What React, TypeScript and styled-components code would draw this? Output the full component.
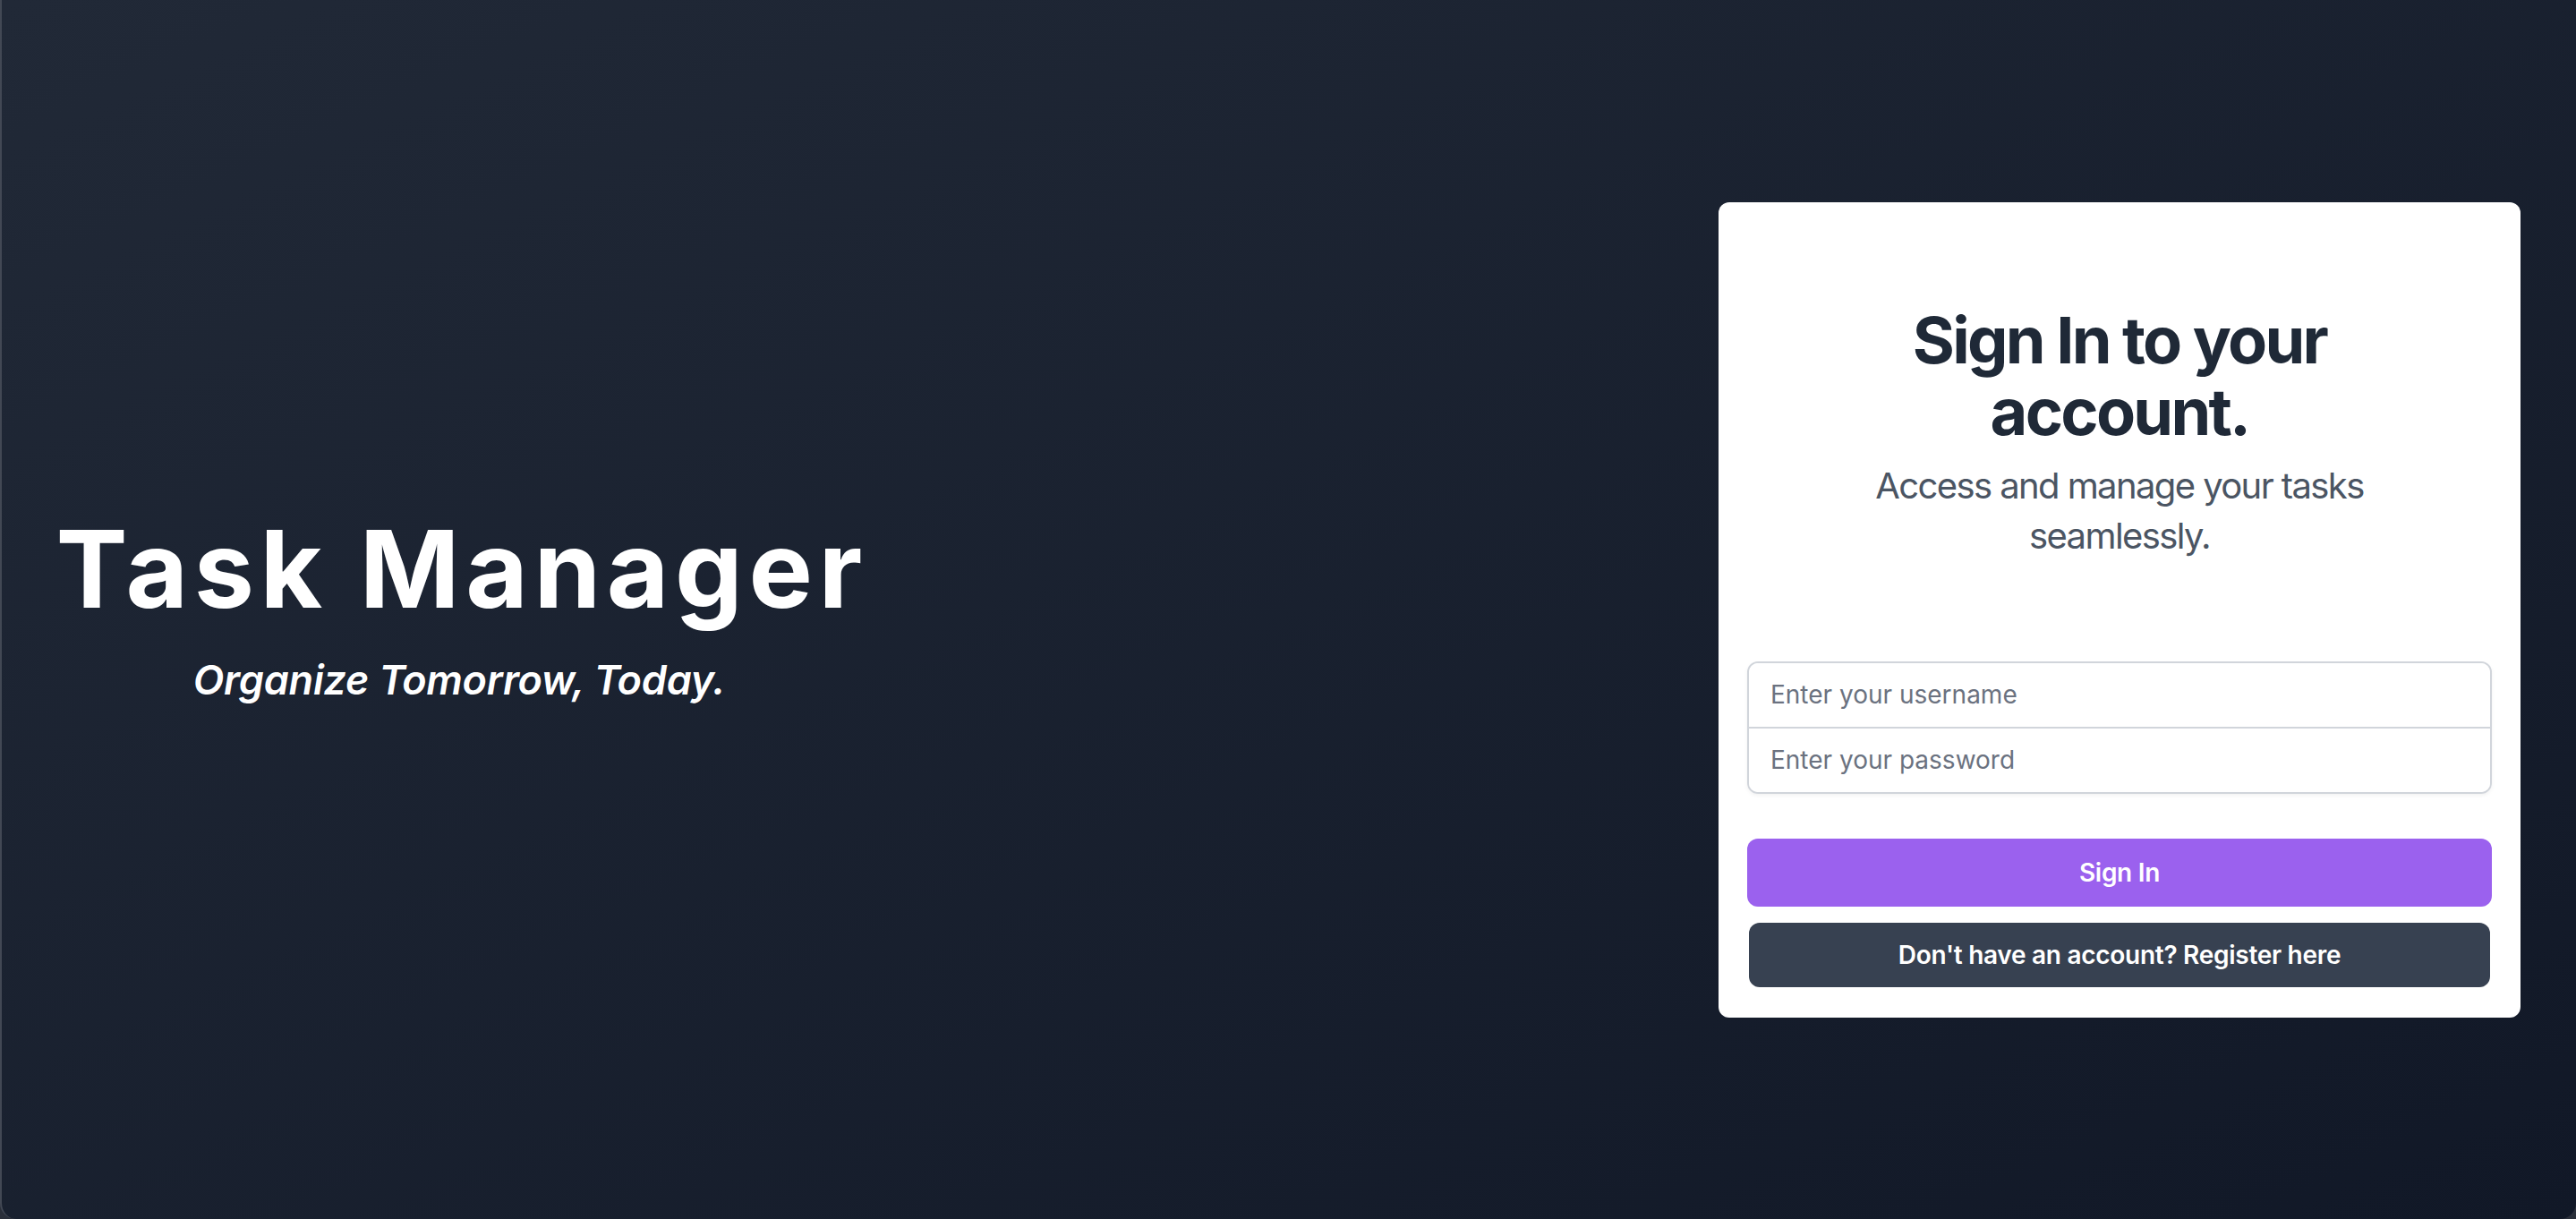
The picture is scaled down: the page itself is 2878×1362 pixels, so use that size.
import React from "react";
import styled, { createGlobalStyle } from "styled-components";

const GlobalStyle = createGlobalStyle`
  html, body {
    margin: 0;
    padding: 0;
    background: #2a2f3a;
  }
  * { box-sizing: border-box; }
  body {
    font-family: Inter, "Noto Sans", "Liberation Sans", sans-serif;
  }
`;

const Page = styled.main`
  height: 100vh;
  width: 100%;
  display: flex;
  align-items: center;
  justify-content: space-between;
  background: linear-gradient(to bottom right, #212937, #111827);
  border-left: 2px solid #424854;
  border-bottom-left-radius: 18px;
  border-bottom-right-radius: 18px;
  overflow: hidden;
`;

const Hero = styled.section`
  width: 1022px;
  display: flex;
  flex-direction: column;
  align-items: center;
  text-align: center;
  color: #ffffff;
`;

const Title = styled.h1`
  margin: 0;
  font-size: 120px;
  line-height: 120px;
  font-weight: 700;
  letter-spacing: 0.055em;
  margin-right: -0.055em;
`;

const Tagline = styled.p`
  margin: 37px 0 0;
  font-size: 45px;
  line-height: 54px;
  font-weight: 600;
  font-style: italic;
  letter-spacing: -0.005em;
`;

const Card = styled.section`
  width: 896px;
  margin-right: 62px;
  background: #ffffff;
  border-radius: 12px;
  padding: 32px 32px 34px;
  display: flex;
  flex-direction: column;
`;

const Header = styled.header`
  padding-top: 82px;
  display: flex;
  flex-direction: column;
  align-items: center;
  text-align: center;
`;

const Heading = styled.h2`
  margin: 0;
  max-width: 600px;
  font-size: 72px;
  line-height: 80px;
  font-weight: 700;
  color: #1f2937;
  letter-spacing: -0.038em;
`;

const Subheading = styled.p`
  margin: 15px 0 0;
  max-width: 600px;
  font-size: 40px;
  line-height: 56px;
  font-weight: 400;
  color: #4b5563;
  letter-spacing: -0.04em;
`;

const Form = styled.form`
  margin-top: 112px;
  display: flex;
  flex-direction: column;
`;

const InputGroup = styled.div`
  display: flex;
  flex-direction: column;
  border: 2px solid #d1d5db;
  border-radius: 12px;
  overflow: hidden;
  box-shadow: 0 2px 4px rgba(0, 0, 0, 0.05);
`;

const Field = styled.input<{ $divider?: boolean }>`
  height: ${(p) => (p.$divider ? 73 : 71)}px;
  border: none;
  border-top: ${(p) => (p.$divider ? "2px solid #d1d5db" : "none")};
  padding: 0 24px;
  font-family: inherit;
  font-size: 28px;
  color: #111827;
  background: #ffffff;
  outline: none;
  &::placeholder {
    color: #6b7280;
  }
`;

const Button = styled.button<{ $variant: "primary" | "secondary" }>`
  display: flex;
  align-items: center;
  justify-content: center;
  width: ${(p) => (p.$variant === "primary" ? "100%" : "calc(100% - 4px)")};
  align-self: center;
  height: ${(p) => (p.$variant === "primary" ? 76 : 72)}px;
  margin-top: ${(p) => (p.$variant === "primary" ? 50 : 18)}px;
  border: none;
  border-radius: 12px;
  background: ${(p) => (p.$variant === "primary" ? "#9b61ee" : "#374151")};
  color: #ffffff;
  font-family: inherit;
  font-size: 28px;
  font-weight: 600;
  letter-spacing: -0.01em;
  cursor: pointer;
`;

export default function App() {
  return (
    <>
      <GlobalStyle />
      <Page>
        <Hero>
          <Title>Task Manager</Title>
          <Tagline>Organize Tomorrow, Today.</Tagline>
        </Hero>
        <Card>
          <Header>
            <Heading>Sign In to your account.</Heading>
            <Subheading>Access and manage your tasks seamlessly.</Subheading>
          </Header>
          <Form onSubmit={(e) => e.preventDefault()}>
            <InputGroup>
              <Field type="text" placeholder="Enter your username" />
              <Field type="password" placeholder="Enter your password" $divider />
            </InputGroup>
            <Button type="submit" $variant="primary">Sign In</Button>
            <Button type="button" $variant="secondary">
              Don't have an account? Register here
            </Button>
          </Form>
        </Card>
      </Page>
    </>
  );
}
